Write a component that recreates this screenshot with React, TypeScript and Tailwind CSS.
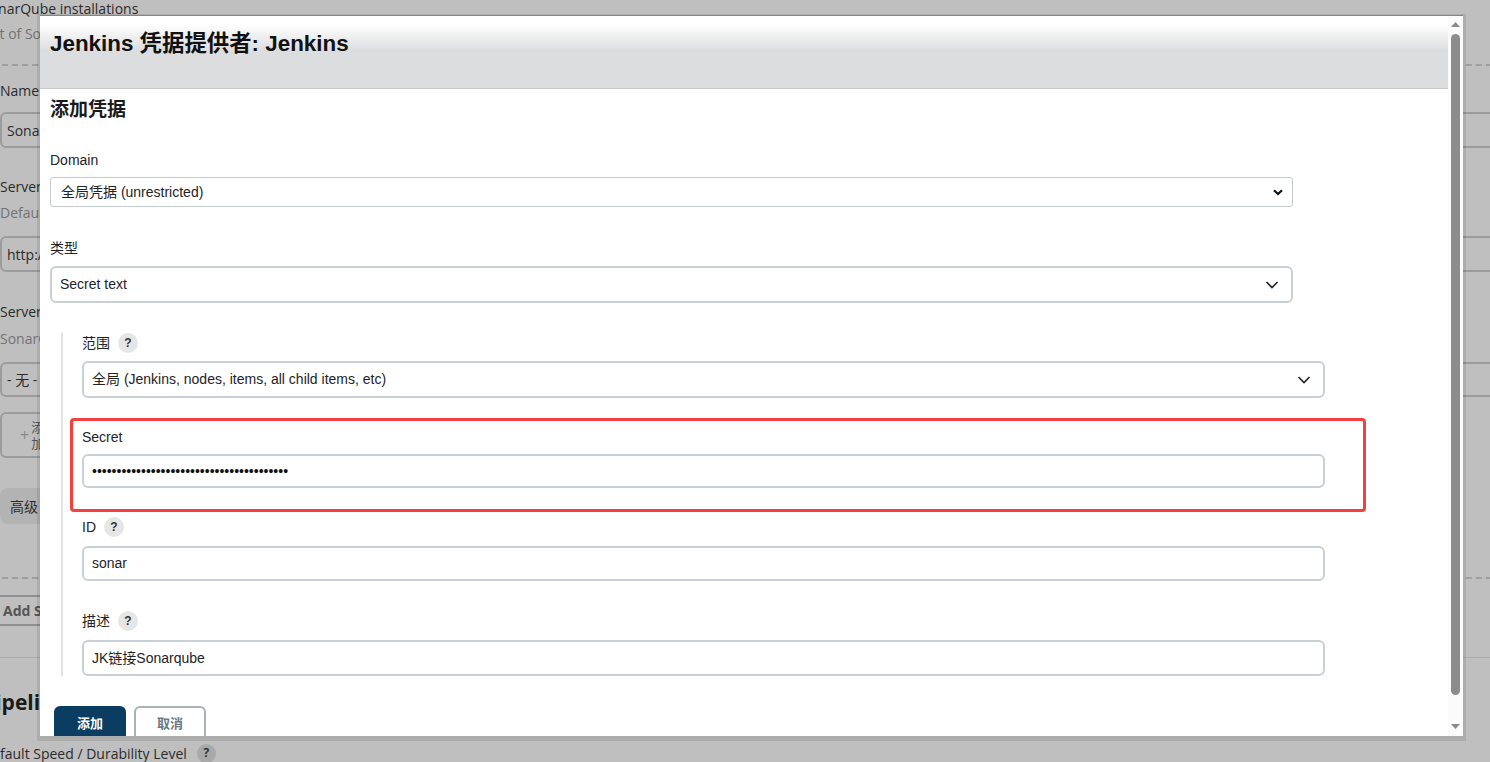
import React from "react";

function Help() {
  return (
    <span className="ml-[8px] inline-flex h-[20px] w-[20px] items-center justify-center rounded-full bg-[#e6e6e6] text-[12px] font-bold leading-none text-[#333]">
      ?
    </span>
  );
}

function Chevron({ bold }: { bold?: boolean }) {
  if (bold) {
    return (
      <svg width="10" height="7" viewBox="0 0 10 7" className="shrink-0">
        <path d="M1 1.2 L5 5 L9 1.2" fill="none" stroke="#111" strokeWidth="2.2" />
      </svg>
    );
  }
  return (
    <svg width="14" height="8" viewBox="0 0 14 8" className="shrink-0">
      <path d="M1.5 1 L7 6.5 L12.5 1" fill="none" stroke="#222" strokeWidth="1.6" />
    </svg>
  );
}

function Label({ text, help }: { text: string; help?: boolean }) {
  return (
    <div className="flex h-[20px] items-center text-[14px] text-[#1f2326]">
      <span>{text}</span>
      {help && <Help />}
    </div>
  );
}

function Select({ text, className }: { text: string; className?: string }) {
  return (
    <div
      className={
        "flex h-[37px] w-[1243px] items-center justify-between rounded-[6px] border-2 border-[#c9d0d5] bg-white pl-[8px] pr-[12px] text-[14px] text-[#1f2326] " +
        (className ?? "")
      }
    >
      <span>{text}</span>
      <Chevron />
    </div>
  );
}

function TextInput({ value, className }: { value: string; className?: string }) {
  return (
    <div
      className={
        "flex h-[35px] w-[1243px] items-center rounded-[6px] border-2 border-[#c9d0d5] bg-white pl-[8px] text-[14px] text-[#1f2326] " +
        (className ?? "")
      }
    >
      {value}
    </div>
  );
}

export default function App() {
  const dots = "•".repeat(40);
  return (
    <div className="relative h-[762px] w-[1490px] overflow-hidden bg-[#bfbfbf] font-['Open_Sans','Noto_Sans_CJK_SC',sans-serif] text-[14px] text-[#2b2b2b]">
      {/* background page (dimmed) */}
      <div className="ml-[-18px] w-[1560px]">
        <div className="h-[17px] text-[14px] leading-[17px]">SonarQube installations</div>
        <div className="mt-[8px] h-[17px] text-[14px] leading-[17px] text-[#737373]">List of SonarQube installations</div>
        <div className="mt-[22px] border-t-2 border-dashed border-[#9e9e9e]" />
        <div className="ml-[18px]">
          <div className="mt-[16px] h-[18px] text-[14px] leading-[18px]">Name</div>
          <div className="mt-[12px] flex h-[36px] items-center rounded-[6px] border-2 border-[#9c9c9c] pl-[5px] text-[14px]">SonarQube</div>
          <div className="mt-[30px] h-[18px] text-[14px] leading-[18px]">Server URL</div>
          <div className="mt-[8px] h-[18px] text-[14px] leading-[18px] text-[#737373]">Default is http://localhost:9000</div>
          <div className="mt-[14px] flex h-[36px] items-center rounded-[6px] border-2 border-[#9c9c9c] pl-[5px] text-[14px]">http://192.168.1.10:9000</div>
          <div className="mt-[31px] h-[18px] text-[14px] leading-[18px]">Server authentication token</div>
          <div className="mt-[9px] h-[18px] text-[14px] leading-[18px] text-[#737373]">SonarQube authentication token. Mandatory when anonymous access is disabled.</div>
          <div className="mt-[14px] flex h-[35px] items-center rounded-[6px] border-2 border-[#9c9c9c] pl-[5px] text-[14px]">- 无 -</div>
          <div className="mt-[15px] flex h-[46px] w-[80px] items-center rounded-[6px] border-2 border-[#9c9c9c] pl-[18px] text-[13px] leading-[16px] text-[#555]">
            <span className="mr-[2px] text-[16px] text-[#888]">+</span>
            <span className="flex flex-col">
              <span>添</span>
              <span>加</span>
            </span>
          </div>
          <div className="mt-[30px] flex h-[36px] w-[70px] items-center rounded-[8px] bg-[#b3b3b3] pl-[10px] text-[14px]">高级</div>
        </div>
        <div className="mt-[53px] border-t-2 border-dashed border-[#9e9e9e]" />
        <div className="ml-[9px] mt-[16px] flex h-[31px] w-[150px] items-center rounded-[6px] border-2 border-[#8f8f8f] pl-[10px] text-[14px] font-bold text-[#555]">
          Add SonarQube
        </div>
        <div className="mt-[31px] border-t border-[#aaaaaa]" />
        <div className="mt-[32px] h-[24px] text-[21px] font-bold leading-[24px] text-[#1a1a1a]">Pipeline Speed/Durability Settings</div>
        <div className="mt-[29px] flex h-[20px] items-center text-[14px]">
          <span>Default Speed / Durability Level</span>
          <span className="ml-[10px] inline-flex h-[19px] w-[19px] items-center justify-center rounded-full bg-[#a9a9a9] text-[12px] font-bold text-[#333]">?</span>
        </div>
      </div>

      {/* dialog */}
      <div className="absolute left-[40px] top-[15px] flex h-[721px] w-[1423px] border-t border-[#858585] bg-white shadow-[0_2px_0_3px_rgba(0,0,0,0.09)] font-['Liberation_Sans','Noto_Sans_CJK_SC',sans-serif]">
        <div className="flex w-[1408px] flex-col overflow-hidden">
          <div className="h-[73px] shrink-0 border-b border-[#c9c9c9] bg-[linear-gradient(to_bottom,#ffffff_12%,#dcdddf_48%,#dcdddf_100%)] pl-[10px] pt-[16px]">
            <div className="text-[22.4px] font-bold leading-[24px] text-[#111]">Jenkins 凭据提供者: Jenkins</div>
          </div>
          <div className="pl-[10px] pt-[11px]">
            <div className="h-[20px] text-[19px] font-bold leading-[20px] text-[#1a1a1a]">添加凭据</div>

            <div className="mt-[30px]">
              <Label text="Domain" />
            </div>
            <div className="mt-[7px] flex h-[30px] w-[1243px] items-center justify-between rounded-[3px] border border-[#c3cad0] bg-white pl-[10px] pr-[9px] text-[14px] text-[#1f2326]">
              <span>全局凭据 (unrestricted)</span>
              <Chevron bold />
            </div>

            <div className="mt-[31px]">
              <Label text="类型" />
            </div>
            <Select text="Secret text" className="mt-[8px]" />

            <div className="ml-[11px] mt-[30px] border-l-2 border-[#dfe3e6] pl-[19px]">
              <Label text="范围" help />
              <Select text="全局 (Jenkins, nodes, items, all child items, etc)" className="mt-[8px]" />

              <div className="relative mt-[29px]">
                <Label text="Secret" />
                <div className="mt-[7px] flex h-[34px] w-[1243px] items-center rounded-[6px] border-2 border-[#c9d0d5] bg-white pl-[8px] text-[14px] text-[#111]">
                  {dots}
                </div>
                <div className="pointer-events-none absolute left-[-12px] top-[-9px] h-[94px] w-[1296px] rounded-[4px] border-[3px] border-[#f4403f]" />
              </div>

              <div className="mt-[29px]">
                <Label text="ID" help />
              </div>
              <TextInput value="sonar" className="mt-[9px]" />

              <div className="mt-[30px]">
                <Label text="描述" help />
              </div>
              <TextInput value="JK链接Sonarqube" className="mt-[9px] h-[36px]" />
            </div>

            <div className="ml-[4px] mt-[30px] flex gap-[8px]">
              <div className="flex h-[36px] w-[72px] items-center justify-center rounded-[6px] bg-[#0b3c61] text-[13px] font-bold text-white">添加</div>
              <div className="flex h-[36px] w-[72px] items-center justify-center rounded-[6px] border-2 border-[#a8b2b9] bg-white text-[13px] font-bold text-[#6c7883]">取消</div>
            </div>
          </div>
        </div>
        {/* scrollbar */}
        <div className="flex w-[15px] flex-col items-center bg-[#fbfbfb] pt-[6px]">
          <svg width="9" height="5" viewBox="0 0 9 5">
            <path d="M0 5 L4.5 0 L9 5 Z" fill="#8a8a8a" />
          </svg>
          <div className="mt-[7px] h-[661px] w-[9px] rounded-full bg-[#8c8c8c]" />
          <div className="flex-1" />
          <svg width="9" height="5" viewBox="0 0 9 5" className="mb-[7px]">
            <path d="M0 0 L9 0 L4.5 5 Z" fill="#8a8a8a" />
          </svg>
        </div>
      </div>
    </div>
  );
}
